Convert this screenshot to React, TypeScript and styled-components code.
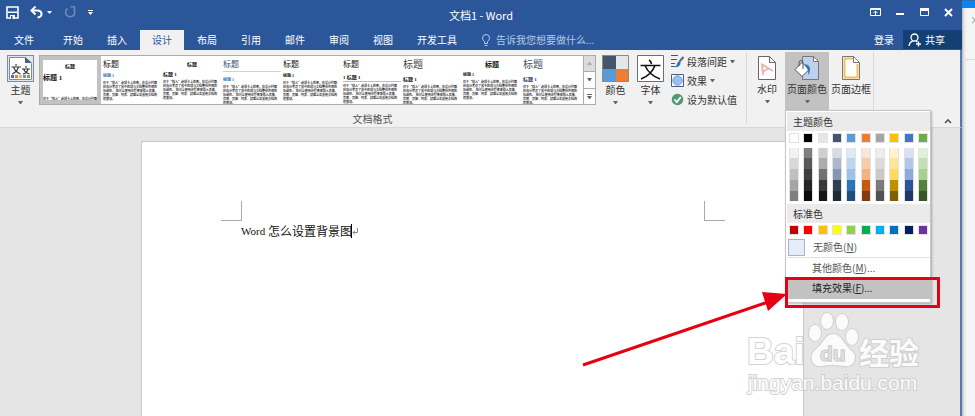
import React from "react";
import styled, { createGlobalStyle, css } from "styled-components";

const sans = `"Noto Sans CJK SC", sans-serif`;
const serif = `"Liberation Serif", "Noto Sans CJK SC", serif`;

const Global = createGlobalStyle`
  html, body, #root { height: 100%; }
  body { margin: 0; overflow: hidden; background: #f5f5f5; font: 10px/14px ${sans}; color: #333; }
  *, *::before, *::after { box-sizing: border-box; }
  button, input { font: inherit; color: inherit; border: 0; padding: 0; margin: 0; background: none; }
  button { cursor: pointer; white-space: nowrap; }
  svg { display: block; flex: none; }
`;

const Desktop = styled.div`display: flex; height: 100vh;`;
const Window = styled.main`flex: 1; min-width: 0; display: flex; flex-direction: column; z-index: 1;`;
const Backdrop = styled.aside`
  width: 13px; display: flex; flex-direction: column; overflow: hidden;
  background: linear-gradient(to right, #b4b4b4, #e6e6e6 2px, #f5f5f5 5px);
`;
const BackdropBar = styled.div`height: 8px; background: #0a84f0; border-top: 1px solid #2b6cb5;`;
const BackdropTab = styled.div`
  height: 52px; padding: 5px 0 0 8px; border-bottom: 1px solid #dcdcdc; color: #888;
`;

const TitleBar = styled.header`
  display: grid; grid-template-columns: 1fr auto 1fr; height: 30px; background: #2b579a; color: #fff;
`;
const QuickAccess = styled.div`display: flex; align-items: flex-start; padding: 6px 0 0 6px;`;
const QuickButton = styled.button<{ $gap?: number; $dim?: boolean }>`
  margin-right: ${(p) => p.$gap ?? 0}px; opacity: ${(p) => (p.$dim ? 0.3 : 1)};
`;
const Title = styled.h1`margin: 0; padding-top: 8px; font-size: 11px; line-height: 14px; font-weight: 400;`;
const WindowButtons = styled.div`
  display: flex; justify-content: flex-end; gap: 12px; padding: 6px 8px 0 0; align-items: flex-start;
`;

const TabBar = styled.nav`display: flex; height: 20px; background: #2b579a; color: #fff;`;
const Tab = styled.button<{ $active?: boolean; $file?: boolean }>`
  min-width: 44px; padding: 0 12px; line-height: 18px;
  ${(p) => p.$file && css`padding: 0 17px 0 14px;`}
  ${(p) => p.$active && css`margin: 0 1px; background: #f1f1f1; color: #2b579a;`}
`;
const TellMe = styled.label`
  display: flex; align-items: center; gap: 5px; flex: 1; margin-left: 12px; color: #b3c7e6;
  input { flex: 1; min-width: 0; line-height: 18px; outline: 0; }
  input::placeholder { color: #b3c7e6; opacity: 1; }
`;
const SignIn = styled.button`padding: 0 9px; line-height: 18px;`;
const Share = styled.button`
  display: flex; align-items: center; gap: 3px; width: 59px; padding-left: 5px; background: #133f75;
  line-height: 18px; margin-bottom: 1px;
`;

const Ribbon = styled.section`
  position: relative; z-index: 2; display: flex; height: 78px; background: #f1f1f1;
  border-bottom: 1px solid #d8d8d8; border-right: 2px solid #5478b3;
`;
const Group = styled.div<{ $pad: number }>`
  display: flex; flex-direction: column; margin: 2px 0 3px; padding-left: ${(p) => p.$pad}px;
  border-right: 1px solid #dadada;
`;
const GroupRow = styled.div`display: flex; align-items: flex-start;`;
const GroupLabel = styled.div`margin: auto 0 0 -8px; text-align: center; line-height: 10px; color: #555;`;
const BigButton = styled.button<{ $width: number; $active?: boolean; $top?: number }>`
  display: flex; flex-direction: column; align-items: center; width: ${(p) => p.$width}px; height: 58px;
  padding-top: ${(p) => p.$top ?? 3}px; background: ${(p) => (p.$active ? "#c2c2c2" : "none")};
  span { line-height: 16px; }
`;
const Caret = styled.i`
  border: 2px solid transparent; border-top: 3px solid #666; border-bottom: 0; width: 5px; height: 3px;
`;
const CaretBelow = styled(Caret)`margin-top: 3px;`;

const Gallery = styled.div`
  display: flex; width: 557px; height: 50px; margin: 3px 6px 0 5px; background: #fff; border: 1px solid #ababab;
`;
const Style = styled.button<{ $selected?: boolean }>`
  display: flex; flex-direction: column; width: 60px; height: 48px; padding: 3px 0 0 2px; overflow: hidden;
  text-align: left; font-family: ${serif}; color: #111;
  ${(p) => p.$selected && css`width: 61px; padding: 1px 0 0; border: 4px solid #c2c2c2; border-left-width: 3px;`}
`;
const StyleTitle = styled.span<{ $size: number; $center?: boolean; $rule?: boolean; $color?: string }>`
  font-size: ${(p) => p.$size}px; line-height: 12px; height: ${(p) => (p.$rule ? 13 : 12)}px;
  color: ${(p) => p.$color ?? "#111"};
  ${(p) => p.$center && css`text-align: center; font-weight: 700;`}
  ${(p) => p.$rule && css`border-bottom: 1px solid #c5d5e8;`}
`;
const StyleHead = styled.span<{ $size: number; $top: number; $rule?: boolean; $color?: string }>`
  margin-top: ${(p) => p.$top}px; font-size: ${(p) => p.$size}px; line-height: 6px; font-weight: 700;
  color: ${(p) => p.$color ?? "#111"};
  ${(p) => p.$rule && css`border-bottom: 1px solid #bbb;`}
`;
const StyleBody = styled.span<{ $top?: number }>`
  width: 55px; margin-top: ${(p) => p.$top ?? 2}px; white-space: normal; font: 500 3px/4px ${sans}; color: #000;
`;
const GalleryScroll = styled.div`display: flex; flex-direction: column; margin-left: auto; width: 12px; border-left: 1px solid #ababab;`;
const ScrollButton = styled.button<{ $off?: boolean }>`
  flex: 1; display: flex; flex-direction: column; align-items: center; justify-content: center; gap: 1px;
  background: ${(p) => (p.$off ? "#dcdcdc" : "#fdfdfd")};
  & + & { border-top: 1px solid #ababab; }
`;
const Up = styled(Caret)`transform: rotate(180deg); opacity: 0.4;`;
const Bar = styled.i`width: 5px; height: 1px; background: #666;`;

const SmallList = styled.div`display: flex; flex-direction: column; padding: 0 9px 0 0; margin-left: -1px;`;
const SmallButton = styled.button`
  display: flex; align-items: center; gap: 3px; height: 19px; line-height: 19px;
`;
const Collapse = styled.button`margin: auto 7px 2px auto;`;

const MenuAnchor = styled.div`position: relative;`;
const Menu = styled.div`
  position: absolute; left: 0; top: 58px; width: 146px; padding: 1px 0 3px 1px; background: #fff;
  border: 1px solid #c6c6c6; box-shadow: 1px 1px 2px #0004;
`;
const MenuHeading = styled.h2`
  margin: 0; padding-left: 6px; font-size: 10px; line-height: 19px; font-weight: 400; background: #ebebeb; color: #333;
`;
const Swatches = styled.div<{ $top: number; $bottom: number }>`
  display: flex; justify-content: space-between; padding: 0 2px; margin: ${(p) => p.$top}px 0 ${(p) => p.$bottom}px;
`;
const Swatch = styled.button<{ $color: string }>`
  width: 10px; height: 10px; background: ${(p) => p.$color}; border: 1px solid #dfe2e6;
`;
const Shades = styled.div`
  display: grid; grid-template-rows: 10px 11px 11px 11px 10px; width: 10px; border: 1px solid #dfe2e6; border-width: 0 1px;
`;
const Shade = styled.button<{ $color: string }>`background: ${(p) => p.$color};`;
const MenuItem = styled.button<{ $hot?: boolean }>`
  position: relative; display: flex; align-items: center; width: 100%; height: 20px; padding: 0 0 2px 25px;
  background: ${(p) => (p.$hot ? "#c2c2c2" : "none")}; color: ${(p) => (p.$hot ? "#222" : "#555")};
`;
const NoColor = styled(MenuItem)`padding: 0 0 0 1px; gap: 8px;`;
const NoColorBox = styled.i`width: 17px; height: 17px; background: #e6edf8; border: 1px solid #9db5da;`;
const Divider = styled.hr`margin: 0 0 1px; border: 0; border-top: 1px solid #e1e1e1;`;
const Highlight = styled.i`
  position: absolute; left: -2px; top: -2px; width: 155px; height: 31px; border: 3px solid #e60012; pointer-events: none;
`;
const Pointer = styled.svg`position: absolute; right: 100%; top: 11px; pointer-events: none; overflow: visible;`;

const Canvas = styled.section`
  position: relative; flex: 1; display: flex; padding: 13px 156px 0 141px; background: #e5e5e5;
  border-right: 2px solid #5478b3; overflow: hidden;
`;
const Paper = styled.article`
  flex: 1; padding: 59px 78px 0 79px; background: #fff; border: 1px solid #c8c8c8; border-bottom: 0;
`;
const Corners = styled.div`display: flex; justify-content: space-between;`;
const Corner = styled.i<{ $side: "left" | "right" }>`
  width: 21px; height: 20px; border-bottom: 1px solid #aaa;
  ${(p) => (p.$side === "left" ? "border-right" : "border-left")}: 1px solid #aaa;
`;
const Line = styled.p`
  display: flex; align-items: center; margin: 1px 0 0 20px; font: 12px/18px "Noto Sans CJK SC", sans-serif; color: #111;
`;
const Latin = styled.span`font: 11px/16px "Liberation Serif", serif; white-space: pre;`;
const Cursor = styled.i`width: 1px; height: 14px; margin-left: -1px; background: #000;`;
const Watermark = styled.svg`position: absolute; right: 38px; bottom: 16px; pointer-events: none;`;

const BODY = "对于“插入”选项卡上的库，在设计时都应充分考虑了其中的项与文档整体外观的协调性。 您可以使用这些库来插入表格、页眉、页脚、列表、封面以及其他文档构建基块。";

type Preset = { size: number; center?: boolean; rule?: boolean; color?: string; top: number; head: string; hSize: number; hColor?: string; hRule?: boolean };
const presets: Preset[] = [
  { size: 8, top: 2, head: "标题 1", hSize: 4, hColor: "#2e74b5" },
  { size: 5, center: true, top: 1, head: "标题 1", hSize: 5 },
  { size: 8, color: "#34507a", rule: true, top: 5, head: "标题 1", hSize: 4, hColor: "#2e74b5" },
  { size: 8, top: 2, head: "标题 1", hSize: 4 },
  { size: 8, top: 4, head: "1  标题 1", hSize: 5, hRule: true },
  { size: 10, color: "#444", top: 6, head: "标题 1", hSize: 5 },
  { size: 7, center: true, top: 1, head: "标题 1", hSize: 4 },
  { size: 10, color: "#44546a", top: 6, head: "标题 1", hSize: 5, hColor: "#1f3864" },
];

const themeColors = ["#ffffff", "#000000", "#e7e6e6", "#44546a", "#5b9bd5", "#ed7d31", "#a5a5a5", "#ffc000", "#4472c4", "#70ad47"];
const shades = [
  ["#f2f2f2", "#d8d8d8", "#bfbfbf", "#a5a5a5", "#7f7f7f"],
  ["#7f7f7f", "#595959", "#3f3f3f", "#262626", "#0c0c0c"],
  ["#d0cece", "#aeabab", "#757070", "#3a3838", "#171616"],
  ["#d6dce4", "#adb9ca", "#8496b0", "#323f4f", "#222a35"],
  ["#deebf6", "#bdd7ee", "#9cc3e5", "#2e75b5", "#1e4e79"],
  ["#fbe5d5", "#f7cbac", "#f4b183", "#c55a11", "#833c0b"],
  ["#ededed", "#dbdbdb", "#c9c9c9", "#7b7b7b", "#525252"],
  ["#fff2cc", "#fee599", "#ffd965", "#bf9000", "#7f6000"],
  ["#d9e2f3", "#b4c6e7", "#8eaadb", "#2f5496", "#1f3864"],
  ["#e2efd9", "#c5e0b3", "#a8d08d", "#538135", "#375623"],
];
const standardColors = ["#c00000", "#ff0000", "#ffc000", "#ffff00", "#92d050", "#00b050", "#00b0f0", "#0070c0", "#002060", "#7030a0"];

const ThemeIcon = () => (
  <svg width="27" height="27" viewBox="0 0 27 27">
    <rect x=".5" y=".5" width="26" height="26" fill="#dfe5ee" stroke="#7f8a9c" />
    <path d="M2.500 2.500h16l6 6v16h-22z" fill="#fff" stroke="#7f8a9c" />
    <path d="M18 2v6h7z" fill="#4b6180" />
    <g fill="none" stroke="#333" strokeWidth="1.100">
      <path d="M9 9v2M4.500 12h9.500M11.500 12q-1.500 5-6.500 7M6.500 12q2 5 7 7M19 11v2M15 14h8M21 14q-1 4-5 5M16.500 14q2 4 6 5" />
    </g>
    <path d="M4 20h3v3H4z" fill="#4472c4" /><path d="M8 20h3v3H8z" fill="#ed7d31" />
    <path d="M12 20h3v3h-3z" fill="#ffc000" /><path d="M16 20h3v3h-3z" fill="#5b9bd5" /><path d="M20 20h3v3h-3z" fill="#70ad47" />
  </svg>
);
const ColorsIcon = () => (
  <svg width="27" height="27" viewBox="0 0 27 27">
    <path d="M0 0h14v14H0z" fill="#44546a" /><path d="M14 0h13v14H14z" fill="#e7e6e6" />
    <path d="M0 14h14v13H0z" fill="#5b9bd5" /><path d="M14 14h13v13H14z" fill="#ed7d31" />
    <path d="M.5.5h26v26H.5z" fill="none" stroke="#8a8a8a" />
  </svg>
);
const FontsIcon = () => (
  <svg width="27" height="27" viewBox="0 0 27 27">
    <path d="M.5.5h26v26H.5z" fill="#fff" stroke="#5f7188" />
    <path d="M12 5q2 1 2.500 4M3.500 10.500h20M18 10.500Q14.500 20 4 24M8 10.500Q12 20 23 24" fill="none" stroke="#111" strokeWidth="1.600" />
  </svg>
);
const SpacingIcon = () => (
  <svg width="13" height="13" viewBox="0 0 13 13" fill="none" stroke="#555">
    <path d="M0 .5h7M0 4.500h6M0 8.500h4M0 11.500h4" />
    <path d="M12.500 2L8.500 6.500" strokeWidth="2" stroke="#666" />
    <path d="M8.500 6q2 2 0 4.500T3.500 12q2-.5 2.500-3t2.500-3z" fill="#2e75b6" stroke="none" />
  </svg>
);
const EffectsIcon = () => (
  <svg width="13" height="13" viewBox="0 0 13 13"><path d="M.5.5h12v12H.5z" fill="#fff" stroke="#4a5f80" /><circle cx="6.500" cy="6.500" r="4.700" fill="#9cc0ee" stroke="#6f9bd8" /></svg>
);
const DefaultIcon = () => (
  <svg width="13" height="13" viewBox="0 0 13 13"><circle cx="6.500" cy="6.500" r="5.800" fill="#4f9a78" /><path d="M3.500 6.500l2.300 2.500 4-5" fill="none" stroke="#fff" strokeWidth="1.800" /></svg>
);
const WatermarkIcon = () => (
  <svg width="19" height="25" viewBox="0 0 19 25">
    <path d="M.5.5h11l6 6v17H.5z" fill="#fff" stroke="#666" /><path d="M11.500.5v6h6" fill="none" stroke="#666" />
    <path d="M5 19L4 8.500 15 15M4.500 16l6.500-4" fill="none" stroke="#efb5a8" strokeWidth="2" />
  </svg>
);
const PageColorIcon = () => (
  <svg width="26" height="25" viewBox="0 0 26 25">
    <path d="M8.500.5h11l5 5v18h-16z" fill="#bcd2ec" stroke="#777" /><path d="M19.500.5v5h5z" fill="#fff" stroke="#777" />
    <path d="M8 6.500l7 7-7 7-7-7z" fill="#fff" stroke="#555" /><path d="M5 10V7q0-2.500 2-2.500T9 7v6" fill="none" stroke="#555" />
    <path d="M11 8q5 1 5 5t-2 6q1-5-2-8z" fill="#2e75b6" />
  </svg>
);
const PageBorderIcon = () => (
  <svg width="19" height="25" viewBox="0 0 19 25">
    <path d="M.5.5h11l6 6v17H.5z" fill="#fff" stroke="#777" /><path d="M2.500 2.500h8.500M2.500 2v19.500h13V8" fill="none" stroke="#eebf5c" strokeWidth="2" />
    <path d="M11.500.5v6h6z" fill="#fff" stroke="#777" />
  </svg>
);

export default function App() {
  return (
    <>
      <Global />
      <Desktop>
        <Window>
          <TitleBar>
            <QuickAccess>
              <QuickButton aria-label="保存" $gap={11}>
                <svg width="13" height="13" viewBox="0 0 13 13"><path d="M1 1h11v11H1z" fill="none" stroke="#fff" strokeWidth="1.600" /><path d="M2 5.500h9V7H2zM4 9h5v4H4z" fill="#fff" /><path d="M5 10h1.500v3H5z" fill="#2b579a" /></svg>
              </QuickButton>
              <QuickButton aria-label="撤消" $gap={4}>
                <svg width="13" height="13" viewBox="0 0 13 13" fill="none" stroke="#fff" strokeWidth="2"><path d="M5.500.5L1.500 4.500l4 4M2 4.500h6q3.500.5 3.500 3.500T7.500 11.500" /></svg>
              </QuickButton>
              <QuickButton aria-label="撤消选项" $gap={12}>
                <svg width="5" height="13" viewBox="0 0 5 13"><path d="M0 5h5L2.500 8z" fill="#fff" /></svg>
              </QuickButton>
              <QuickButton aria-label="重复" $gap={12} $dim>
                <svg width="12" height="12" viewBox="0 0 12 12" fill="none" stroke="#fff" strokeWidth="1.600"><path d="M3.500 2.500A4.600 4.600 0 1 0 9.500 3M6.500.8h4v4" /></svg>
              </QuickButton>
              <QuickButton aria-label="自定义快速访问工具栏">
                <svg width="5" height="13" viewBox="0 0 5 13"><path d="M0 4h5v1H0zM0 6h5L2.500 9z" fill="#fff" /></svg>
              </QuickButton>
            </QuickAccess>
            <Title>文档1 - Word</Title>
            <WindowButtons>
              <button aria-label="功能区显示选项"><svg width="13" height="12" viewBox="0 0 13 12" fill="none" stroke="#fff"><path d="M1.500 2.500h10v7h-10zM1 3.500h11M6.500 9V5.500M4.500 7l2-2 2 2" /></svg></button>
              <button aria-label="最小化"><svg width="12" height="12" viewBox="0 0 12 12"><path d="M2 7h8v2H2z" fill="#fff" /></svg></button>
              <button aria-label="最大化"><svg width="13" height="12" viewBox="0 0 13 12"><path d="M2.500 2.500h8v7h-8z" fill="none" stroke="#fff" /><path d="M2 2h9v3H2z" fill="#fff" /></svg></button>
              <button aria-label="关闭"><svg width="11" height="12" viewBox="0 0 11 12"><path d="M2 3l7 7M9 3l-7 7" stroke="#fff" strokeWidth="2" /></svg></button>
            </WindowButtons>
          </TitleBar>
          <TabBar>
            <Tab $file>文件</Tab>
            {["开始", "插入", "设计", "布局", "引用", "邮件", "审阅", "视图", "开发工具"].map((t) => (
              <Tab key={t} $active={t === "设计"}>{t}</Tab>
            ))}
            <TellMe>
              <svg width="10" height="13" viewBox="0 0 10 13" fill="none" stroke="#b3c7e6"><path d="M3.500 9.500v-2Q1.500 6 1.500 4a3.500 3.500 0 0 1 7 0q0 2-2 3.500v2zM3.500 11.500h3" /></svg>
              <input type="text" aria-label="操作说明搜索" placeholder="告诉我您想要做什么..." />
            </TellMe>
            <SignIn>登录</SignIn>
            <Share>
              <svg width="14" height="14" viewBox="0 0 14 14" fill="none" stroke="#fff" strokeWidth="1.300"><circle cx="6.500" cy="4.500" r="3.500" /><path d="M1 13q.5-4 4-5.200M8 8l1.500 1M10.500 8.500v5M8 11h5" /></svg>
              共享
            </Share>
          </TabBar>
          <Ribbon>
            <Group $pad={7}>
              <GroupRow>
                <BigButton $width={27}><ThemeIcon /><span>主题</span><CaretBelow /></BigButton>
                <Gallery>
                  <Style $selected>
                    <StyleTitle $size={5} $center>标题</StyleTitle>
                    <StyleHead $size={7} $top={2}>标题 1</StyleHead>
                    <StyleBody $top={16}>{BODY}</StyleBody>
                  </Style>
                  {presets.map((p, i) => (
                    <Style key={i}>
                      <StyleTitle $size={p.size} $center={p.center} $rule={p.rule} $color={p.color}>标题</StyleTitle>
                      <StyleHead $size={p.hSize} $top={p.top} $rule={p.hRule} $color={p.hColor}>{p.head}</StyleHead>
                      <StyleBody>{BODY}</StyleBody>
                    </Style>
                  ))}
                  <GalleryScroll>
                    <ScrollButton aria-label="向上滚动" $off><Up /></ScrollButton>
                    <ScrollButton aria-label="向下滚动"><Caret /></ScrollButton>
                    <ScrollButton aria-label="其他样式"><Bar /><Caret /></ScrollButton>
                  </GalleryScroll>
                </Gallery>
                <BigButton $width={27}><ColorsIcon /><span>颜色</span><CaretBelow /></BigButton>
                <BigButton $width={43}><FontsIcon /><span>字体</span><CaretBelow /></BigButton>
                <SmallList>
                  <SmallButton><SpacingIcon />段落间距<Caret /></SmallButton>
                  <SmallButton><EffectsIcon />效果<Caret /></SmallButton>
                  <SmallButton><DefaultIcon />设为默认值</SmallButton>
                </SmallList>
              </GroupRow>
              <GroupLabel>文档格式</GroupLabel>
            </Group>
            <Group $pad={2}>
              <GroupRow>
                <BigButton $width={36} $top={4}><WatermarkIcon /><span>水印</span><CaretBelow /></BigButton>
                <MenuAnchor>
                  <BigButton $width={44} $top={4} $active aria-expanded="true"><PageColorIcon /><span>页面颜色</span><CaretBelow /></BigButton>
                  <Menu>
                    <MenuHeading>主题颜色</MenuHeading>
                    <Swatches $top={2} $bottom={5}>
                      {themeColors.map((c) => <Swatch key={c} $color={c} aria-label={c} />)}
                    </Swatches>
                    <Swatches $top={0} $bottom={3}>
                      {shades.map((col, i) => (
                        <Shades key={i}>{col.map((c) => <Shade key={c} $color={c} aria-label={c} />)}</Shades>
                      ))}
                    </Swatches>
                    <MenuHeading>标准色</MenuHeading>
                    <Swatches $top={2} $bottom={2}>
                      {standardColors.map((c) => <Swatch key={c} $color={c} aria-label={c} />)}
                    </Swatches>
                    <NoColor><NoColorBox /><span>无颜色(<u>N</u>)</span></NoColor>
                    <Divider />
                    <MenuItem><span>其他颜色(<u>M</u>)...</span></MenuItem>
                    <MenuItem $hot>
                      <span>填充效果(<u>F</u>)...</span>
                      <Highlight />
                      <Pointer width="204" height="75" viewBox="0 0 204 75">
                        <path d="M0 75L185 12" stroke="#e60012" strokeWidth="3" />
                        <path d="M204 4L179 2l6 19z" fill="#e60012" />
                      </Pointer>
                    </MenuItem>
                  </Menu>
                </MenuAnchor>
                <BigButton $width={44} $top={4}><PageBorderIcon /><span>页面边框</span></BigButton>
              </GroupRow>
            </Group>
            <Collapse aria-label="折叠功能区">
              <svg width="10" height="8" viewBox="0 0 10 8"><path d="M2 6l3-3 3 3" fill="none" stroke="#555" strokeWidth="1.600" /></svg>
            </Collapse>
          </Ribbon>
          <Canvas>
            <Paper>
              <Corners><Corner $side="left" /><Corner $side="right" /></Corners>
              <Line>
                <Latin>Word </Latin>怎么设置背景图<Cursor />
                <svg width="6" height="8" viewBox="0 0 6 8" fill="none" stroke="#888"><path d="M5.500 1v4.500H1M3 3.500l-2 2 2 2" /></svg>
              </Line>
            </Paper>
            <Watermark width="176" height="88" viewBox="0 0 176 88" fill="#fff" stroke="#cccccc" strokeWidth="2" paintOrder="stroke" opacity=".85" fontFamily='"Liberation Sans", "Noto Sans CJK SC", sans-serif' fontWeight="700">
              <text x="1" y="52" fontSize="37">Bai</text>
              <ellipse cx="69" cy="21" rx="6" ry="8" /><ellipse cx="81" cy="9" rx="6" ry="8" />
              <ellipse cx="96" cy="10" rx="6" ry="8" /><ellipse cx="106" cy="25" rx="6" ry="8" />
              <path d="M87 22q6 0 10 7 4 6 9 10 5 5 2 11-3 5-10 4-11-2-22 0-8 1-10-5-2-7 4-12 5-4 8-9 4-6 9-6z" />
              <text x="74" y="49" fontSize="21" fill="#ddd" stroke="#aaa" strokeWidth="1">du</text>
              <text x="113" y="52" fontSize="30">经验</text>
              <text x="2" y="78" fontSize="21" fontWeight="400">jingyan.baidu.com</text>
            </Watermark>
          </Canvas>
        </Window>
        <Backdrop>
          <BackdropBar />
          <BackdropTab>×</BackdropTab>
        </Backdrop>
      </Desktop>
    </>
  );
}
